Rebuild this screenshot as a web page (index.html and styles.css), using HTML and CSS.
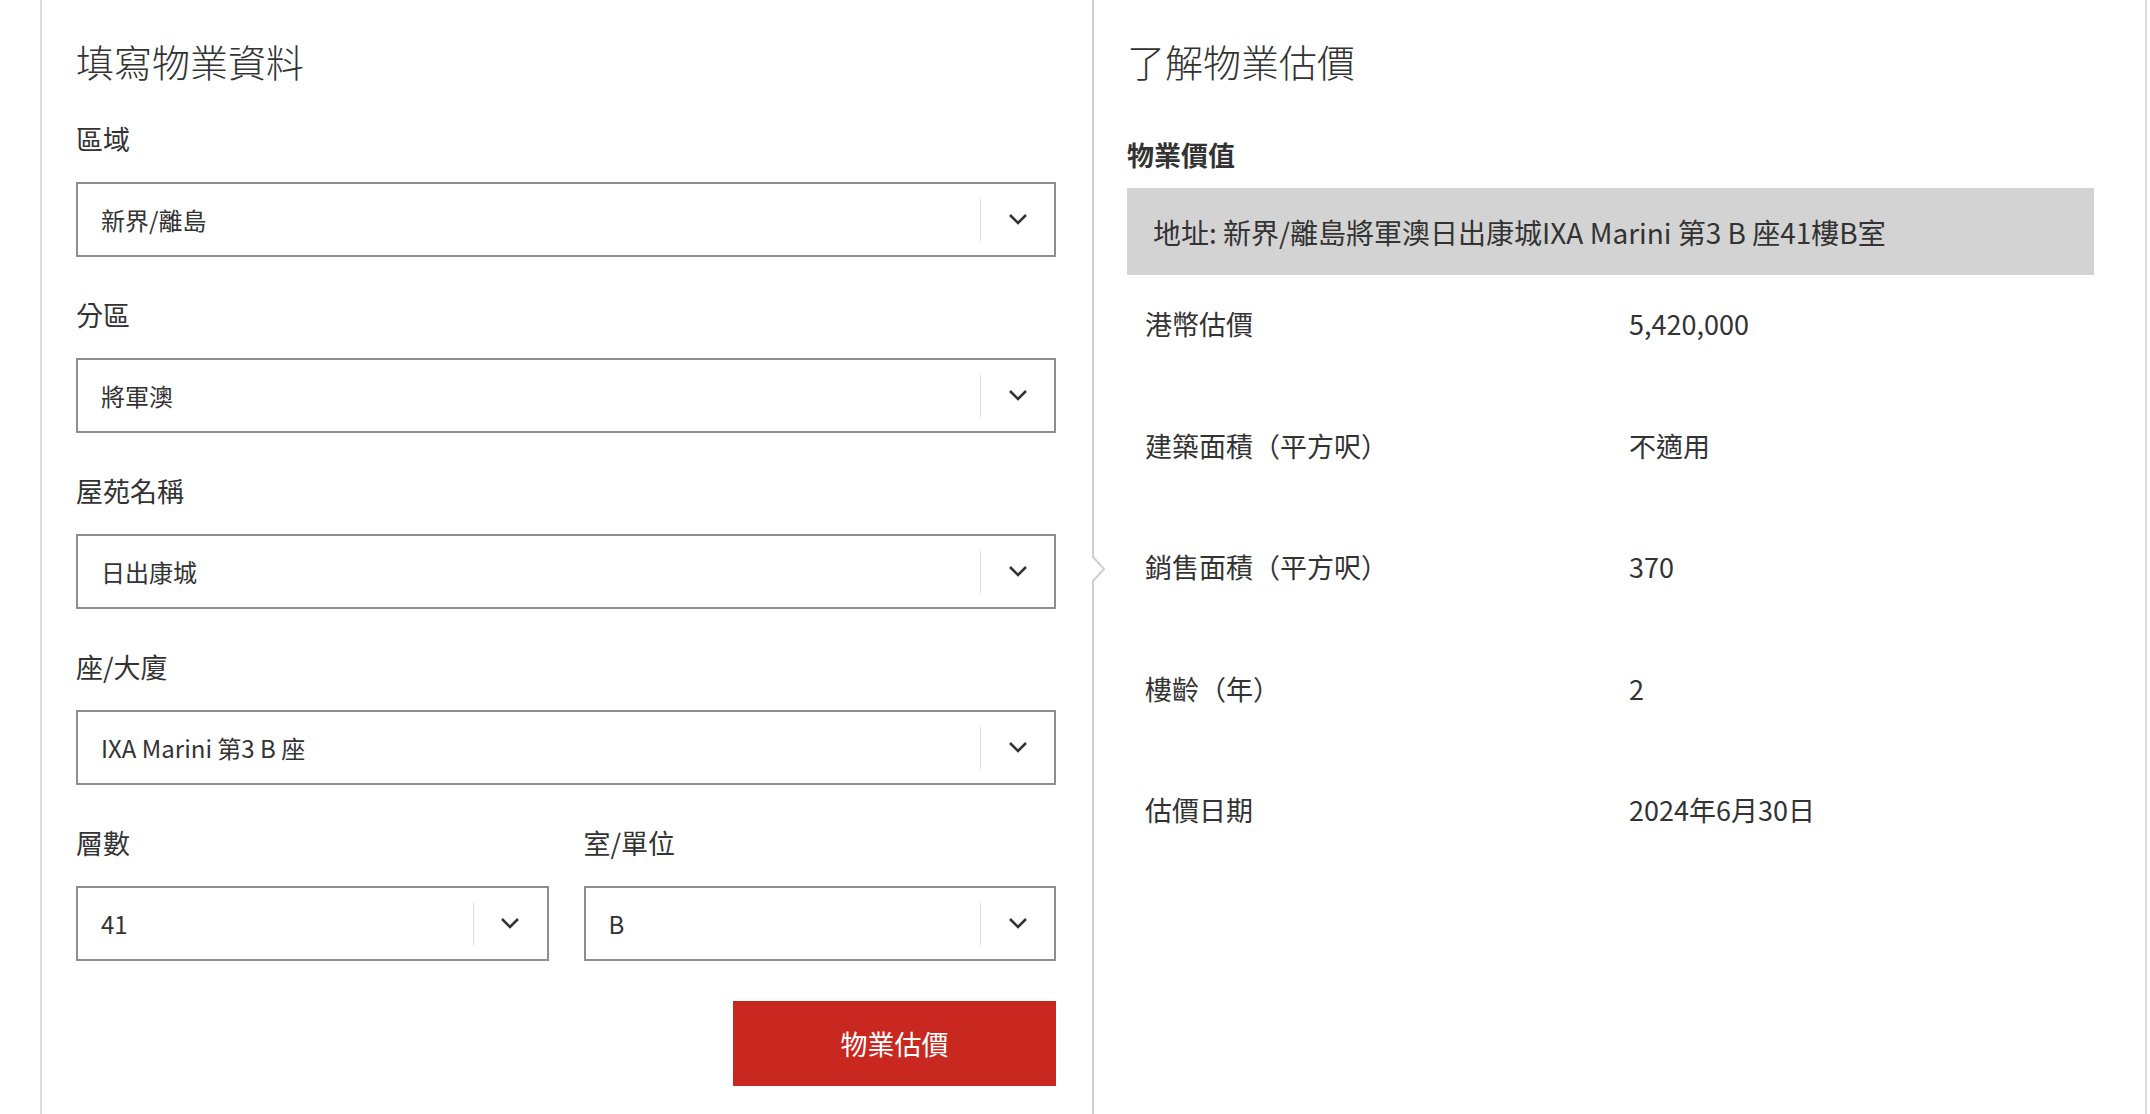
FILE: index.html
```html
<!DOCTYPE html>
<html lang="zh-Hant">
<head>
<meta charset="utf-8">
<title>物業估價</title>
<link rel="stylesheet" href="styles.css">
</head>
<body>
<div class="page">
  <section class="panel form-panel">
    <h2 class="panel-title">填寫物業資料</h2>

    <div class="field">
      <div class="field-label">區域</div>
      <div class="select"><span class="select-value">新界/離島</span><span class="select-sep"></span><span class="select-arrow"><svg width="20" height="13" viewBox="0 0 20 13"><polyline points="2,2 10,10 18,2" fill="none" stroke="#333" stroke-width="2.6"/></svg></span></div>
    </div>

    <div class="field">
      <div class="field-label">分區</div>
      <div class="select"><span class="select-value">將軍澳</span><span class="select-sep"></span><span class="select-arrow"><svg width="20" height="13" viewBox="0 0 20 13"><polyline points="2,2 10,10 18,2" fill="none" stroke="#333" stroke-width="2.6"/></svg></span></div>
    </div>

    <div class="field">
      <div class="field-label">屋苑名稱</div>
      <div class="select"><span class="select-value">日出康城</span><span class="select-sep"></span><span class="select-arrow"><svg width="20" height="13" viewBox="0 0 20 13"><polyline points="2,2 10,10 18,2" fill="none" stroke="#333" stroke-width="2.6"/></svg></span></div>
    </div>

    <div class="field">
      <div class="field-label">座/大廈</div>
      <div class="select"><span class="select-value">IXA Marini 第3 B 座</span><span class="select-sep"></span><span class="select-arrow"><svg width="20" height="13" viewBox="0 0 20 13"><polyline points="2,2 10,10 18,2" fill="none" stroke="#333" stroke-width="2.6"/></svg></span></div>
    </div>

    <div class="field-pair">
      <div class="field">
        <div class="field-label">層數</div>
        <div class="select"><span class="select-value">41</span><span class="select-sep"></span><span class="select-arrow"><svg width="20" height="13" viewBox="0 0 20 13"><polyline points="2,2 10,10 18,2" fill="none" stroke="#333" stroke-width="2.6"/></svg></span></div>
      </div>
      <div class="field">
        <div class="field-label">室/單位</div>
        <div class="select"><span class="select-value">B</span><span class="select-sep"></span><span class="select-arrow"><svg width="20" height="13" viewBox="0 0 20 13"><polyline points="2,2 10,10 18,2" fill="none" stroke="#333" stroke-width="2.6"/></svg></span></div>
      </div>
    </div>

    <div class="actions">
      <button class="btn-primary" type="button">物業估價</button>
    </div>
  </section>

  <section class="panel result-panel">
    <svg class="notch" width="14" height="26" viewBox="0 0 14 26"><rect x="0" y="2" width="3" height="22" fill="#fff"/><polyline points="1,1 12,13 1,25" fill="none" stroke="#d0d0d0" stroke-width="2"/></svg>
    <h2 class="panel-title">了解物業估價</h2>
    <h3 class="section-title">物業價值</h3>
    <div class="address">地址: 新界/離島將軍澳日出康城IXA Marini 第3 B 座41樓B室</div>
    <div class="rows">
      <div class="row"><span class="row-label">港幣估價</span><span class="row-value">5,420,000</span></div>
      <div class="row"><span class="row-label">建築面積（平方呎）</span><span class="row-value">不適用</span></div>
      <div class="row"><span class="row-label">銷售面積（平方呎）</span><span class="row-value">370</span></div>
      <div class="row"><span class="row-label">樓齡（年）</span><span class="row-value">2</span></div>
      <div class="row"><span class="row-label">估價日期</span><span class="row-value">2024年6月30日</span></div>
    </div>
  </section>
</div>
</body>
</html>
```

FILE: styles.css
```css
* { box-sizing: border-box; }

html, body {
  margin: 0;
  padding: 0;
  background: #fff;
}

body {
  font-family: "Noto Sans CJK TC", "Noto Sans", sans-serif;
  color: #333;
}

.page {
  margin-left: 40px;
  width: 2107px;
  min-height: 1114px;
  border-left: 2px solid #dcdcdc;
  border-right: 2px solid #dcdcdc;
  display: grid;
  grid-template-columns: 1050px 1fr;
}

.panel {
  padding-top: 39px;
}

.form-panel {
  padding-left: 34px;
  padding-right: 36px;
}

.result-panel {
  position: relative;
  border-left: 2px solid #d0d0d0;
  padding-left: 33px;
  padding-right: 51px;
}

.notch {
  position: absolute;
  left: -2px;
  top: 556px;
  display: block;
}

.panel-title {
  margin: 0;
  font-size: 38px;
  line-height: 44px;
  font-weight: 300;
  color: #333;
}

.field {
  margin-top: 40px;
}

.form-panel > .field + .field,
.form-panel > .field + .field-pair {
  margin-top: 42px;
}

.field-pair {
  display: grid;
  grid-template-columns: 1fr 1fr;
  column-gap: 35px;
  margin-top: 42px;
}

.field-pair .field {
  margin-top: 0;
}

.field-label {
  font-size: 27px;
  line-height: 32px;
  margin-bottom: 27px;
}

.select {
  height: 75px;
  border: 2px solid #8e8e8e;
  display: flex;
  align-items: center;
  background: #fff;
}

.select-value {
  flex: 1;
  padding-left: 23px;
  font-size: 24px;
  line-height: 30px;
  color: #333;
  white-space: nowrap;
}

.select-sep {
  width: 1px;
  height: 42px;
  background: #dedede;
}

.select-arrow {
  width: 73px;
  display: flex;
  justify-content: center;
  align-items: center;
}

.select-arrow svg {
  display: block;
}

.actions {
  display: flex;
  justify-content: flex-end;
  margin-top: 40px;
}

.btn-primary {
  width: 323px;
  height: 85px;
  border: 0;
  background: #c8281f;
  color: #fff;
  font-family: "Noto Sans CJK TC", "Noto Sans", sans-serif;
  font-size: 27px;
  cursor: pointer;
}

.section-title {
  margin: 56px 0 0;
  font-size: 27px;
  line-height: 32px;
  font-weight: 700;
  color: #333;
}

.address {
  margin-top: 17px;
  height: 87px;
  background: #d3d3d3;
  display: flex;
  align-items: center;
  padding-left: 26px;
  font-size: 28px;
  color: #333;
}

.rows {
  display: flex;
  flex-direction: column;
}

.row {
  display: grid;
  grid-template-columns: 484px 1fr;
  padding: 33px 18px 56.5px;
  font-size: 27px;
  line-height: 32px;
  color: #333;
}
```
